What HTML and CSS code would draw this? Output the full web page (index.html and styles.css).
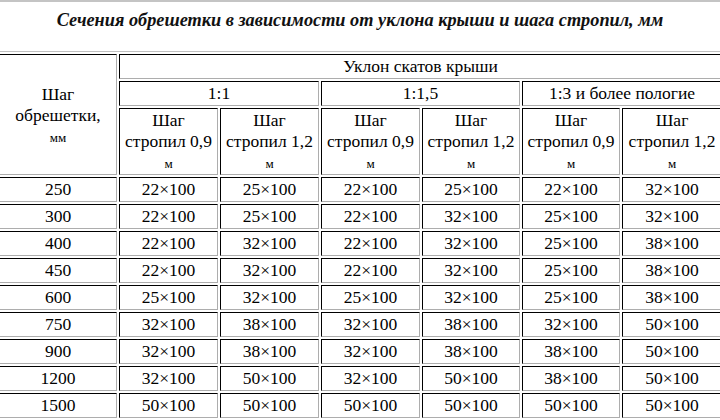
FILE: index.html
```html
<!DOCTYPE html>
<html lang="ru">
<head>
<meta charset="utf-8">
<link rel="stylesheet" href="styles.css">
</head>
<body>
<div class="title">Сечения обрешетки в зависимости от уклона крыши и шага стропил, мм</div>
<table class="grid">
  <colgroup>
    <col class="c-side">
    <col class="c-a"><col class="c-a"><col class="c-a">
    <col class="c-b"><col class="c-b"><col class="c-c">
  </colgroup>
  <tr>
    <td rowspan="3" class="side">Шаг<br>обрешетки,<br><span class="unit">мм</span></td>
    <td colspan="6">Уклон скатов крыши</td>
  </tr>
  <tr>
    <td colspan="2">1:1</td>
    <td colspan="2">1:1,5</td>
    <td colspan="2">1:3 и более пологие</td>
  </tr>
  <tr class="sub">
    <td>Шаг<br>стропил 0,9<br><span class="unit">м</span></td>
    <td>Шаг<br>стропил 1,2<br><span class="unit">м</span></td>
    <td>Шаг<br>стропил 0,9<br><span class="unit">м</span></td>
    <td>Шаг<br>стропил 1,2<br><span class="unit">м</span></td>
    <td>Шаг<br>стропил 0,9<br><span class="unit">м</span></td>
    <td>Шаг<br>стропил 1,2<br><span class="unit">м</span></td>
  </tr>
  <tr><td>250</td><td>22×100</td><td>25×100</td><td>22×100</td><td>25×100</td><td>22×100</td><td>32×100</td></tr>
  <tr><td>300</td><td>22×100</td><td>25×100</td><td>22×100</td><td>32×100</td><td>25×100</td><td>32×100</td></tr>
  <tr><td>400</td><td>22×100</td><td>32×100</td><td>22×100</td><td>32×100</td><td>25×100</td><td>38×100</td></tr>
  <tr><td>450</td><td>22×100</td><td>32×100</td><td>22×100</td><td>32×100</td><td>25×100</td><td>38×100</td></tr>
  <tr><td>600</td><td>25×100</td><td>32×100</td><td>25×100</td><td>32×100</td><td>25×100</td><td>38×100</td></tr>
  <tr><td>750</td><td>32×100</td><td>38×100</td><td>32×100</td><td>38×100</td><td>32×100</td><td>50×100</td></tr>
  <tr><td>900</td><td>32×100</td><td>38×100</td><td>32×100</td><td>38×100</td><td>38×100</td><td>50×100</td></tr>
  <tr><td>1200</td><td>32×100</td><td>50×100</td><td>32×100</td><td>50×100</td><td>38×100</td><td>50×100</td></tr>
  <tr><td>1500</td><td>50×100</td><td>50×100</td><td>50×100</td><td>50×100</td><td>50×100</td><td>50×100</td></tr>
</table>
</body>
</html>
```
FILE: styles.css
```css
html, body {
  margin: 0;
  padding: 0;
  overflow: hidden;
  background: #fff;
}
body {
  width: 720px;
  height: 420px;
  font-family: "Liberation Serif", "Times New Roman", serif;
  color: #000;
}
.title {
  border-top: 2px solid #c4c4c4;
  padding-top: 8px;
  height: 20px;
  line-height: 20px;
  font-size: 18.3px;
  font-weight: bold;
  font-style: italic;
  text-align: center;
  color: #111;
}
.grid {
  margin-top: 21px;
  margin-left: -4px;
  width: 727px;
  table-layout: fixed;
  border-collapse: separate;
  border-spacing: 2px;
  border: 1px solid;
  border-color: #c0c0c0 #555 #555 #c0c0c0;
  font-size: 17.5px;
}
.c-side { width: 118px; }
.c-a { width: 99px; }
.c-b { width: 98px; }
.c-c { width: 100px; }
.grid td {
  box-sizing: border-box;
  border: 1px solid;
  border-color: #000 #adadad #adadad #000;
  padding: 1px 1px;
  line-height: 21px;
  text-align: center;
  vertical-align: middle;
  white-space: nowrap;
}
.grid .sub td {
  padding: 1px 1px 0;
}
.grid td.side {
  line-height: 21px;
  padding-top: 4px;
}
.unit {
  font-size: 13px;
}
```
